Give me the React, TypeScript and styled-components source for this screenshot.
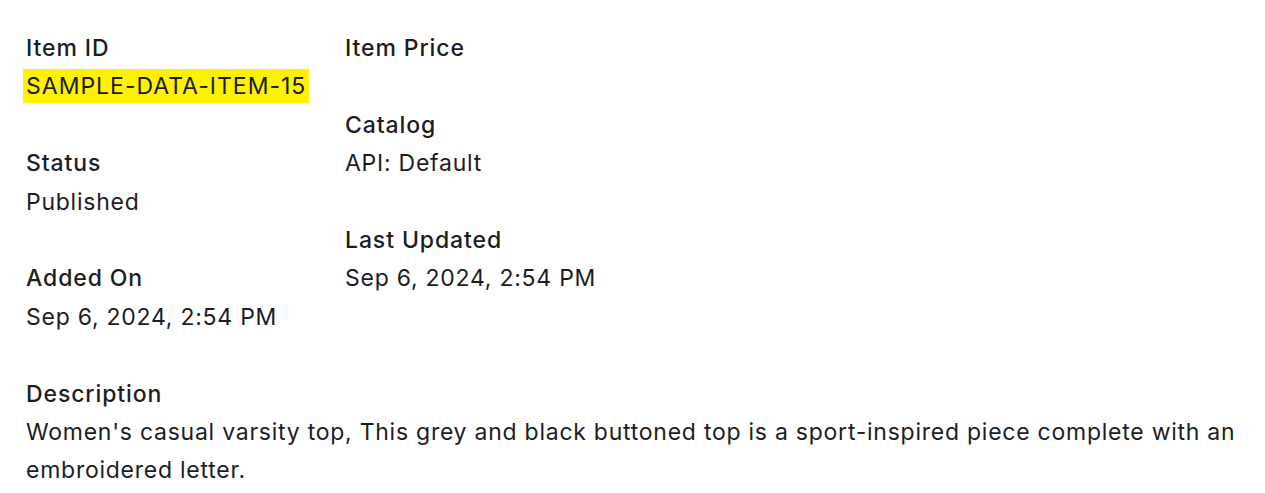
import styled, { createGlobalStyle } from 'styled-components';

const GlobalStyle = createGlobalStyle`
  body {
    margin: 0;
    background: #fff;
    font-family: Inter, "Noto Sans", sans-serif;
    color: #1d1d1f;
  }
`;

const Page = styled.div`
  padding: 29px 26px 0 26px;
  font-size: 23px;
  line-height: 38.4px;
`;

const Columns = styled.div`
  display: grid;
  grid-template-columns: 319px 1fr;
`;

const Column = styled.div`
  display: flex;
  flex-direction: column;
  gap: 38.4px;
`;

const Field = styled.div`
  display: flex;
  flex-direction: column;
`;

const Label = styled.div`
  font-weight: 500;
  letter-spacing: 0.9px;
`;

const Value = styled.div`
  font-weight: 400;
  letter-spacing: 0.75px;
`;

const Highlight = styled.mark`
  background: #fff200;
  color: inherit;
  letter-spacing: 1px;
  padding: 3px 3px;
  margin: 0 -3px;
`;

const Description = styled(Field)`
  margin-top: 38.4px;
`;

const Home = () => {
  return (
    <Page>
      <GlobalStyle />
      <Columns>
        <Column>
          <Field>
            <Label>Item ID</Label>
            <Value>
              <Highlight>SAMPLE-DATA-ITEM-15</Highlight>
            </Value>
          </Field>
          <Field>
            <Label>Status</Label>
            <Value>Published</Value>
          </Field>
          <Field>
            <Label>Added On</Label>
            <Value>Sep 6, 2024, 2:54 PM</Value>
          </Field>
        </Column>
        <Column>
          <Field>
            <Label>Item Price</Label>
            <Value></Value>
          </Field>
          <Field>
            <Label>Catalog</Label>
            <Value>API: Default</Value>
          </Field>
          <Field>
            <Label>Last Updated</Label>
            <Value>Sep 6, 2024, 2:54 PM</Value>
          </Field>
        </Column>
      </Columns>
      <Description>
        <Label>Description</Label>
        <Value>
          Women's casual varsity top, This grey and black buttoned top is a sport-inspired piece complete with an
          embroidered letter.
        </Value>
      </Description>
    </Page>
  );
};

export default Home;
